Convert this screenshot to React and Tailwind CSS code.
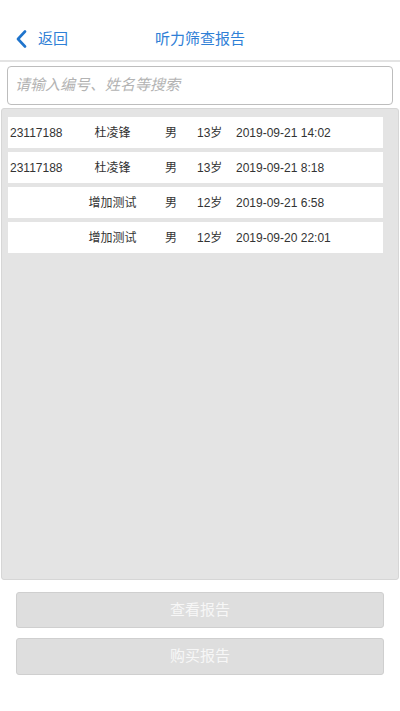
import React from 'react'

const rows = [
  { id: '23117188', name: '杜凌锋', sex: '男', age: '13岁', time: '2019-09-21 14:02' },
  { id: '23117188', name: '杜凌锋', sex: '男', age: '13岁', time: '2019-09-21 8:18' },
  { id: '', name: '增加测试', sex: '男', age: '12岁', time: '2019-09-21 6:58' },
  { id: '', name: '增加测试', sex: '男', age: '12岁', time: '2019-09-20 22:01' },
]

const font = { fontFamily: '"Liberation Sans", "Noto Sans CJK SC", sans-serif' }

export default function App() {
  return (
    <div className="w-[400px] h-[711px] bg-white flex flex-col" style={font}>
      {/* Header */}
      <div className="h-[60px] relative flex items-center justify-center pt-[17px]">
        <button className="absolute left-[16px] top-[17px] bottom-0 flex items-center gap-[11px] text-[15px] text-[#2f80d6]">
          <svg width="11" height="18" viewBox="0 0 11 18" fill="none">
            <path d="M9 1.5 L2 9 L9 16.5" stroke="#1f74cc" strokeWidth="2.6" strokeLinecap="round" strokeLinejoin="round" />
          </svg>
          <span className="leading-none">返回</span>
        </button>
        <h1 className="text-[15px] text-[#2f80d6] leading-none">听力筛查报告</h1>
      </div>
      <div className="h-[2px] bg-[#e3e3e3]" />

      {/* Search */}
      <div className="mx-[7px] mt-[4px] h-[39px] border border-[#bdbdbd] rounded-[4px] flex items-center px-[7px]">
        <input
          className="w-full outline-none text-[15px] italic placeholder-[#b3b3b3] bg-transparent"
          placeholder="请输入编号、姓名等搜索"
        />
      </div>

      {/* List */}
      <div className="mx-[1px] mt-[3px] h-[472px] bg-[#e4e4e4] border border-[#d6d6d6] rounded-[3px] pt-[8px] pl-[6px] pr-[15px] flex flex-col gap-[4px]">
        {rows.map((r, i) => (
          <div key={i} className="h-[31px] bg-white flex items-center text-[12px] text-[#333333]">
            <span className="w-[72px] pl-[2px]">{r.id}</span>
            <span className="w-[65px] text-center">{r.name}</span>
            <span className="w-[52px] text-center">{r.sex}</span>
            <span className="w-[39px]">{r.age}</span>
            <span>{r.time}</span>
          </div>
        ))}
      </div>

      {/* Buttons */}
      <div className="mx-[16px] mt-[12px] flex flex-col gap-[10px]">
        <button className="h-[36px] bg-[#dedede] border border-[#cfcfcf] rounded-[3px] text-[15px] text-[#f7f7f7]">
          查看报告
        </button>
        <button className="h-[37px] bg-[#dedede] border border-[#cfcfcf] rounded-[3px] text-[15px] text-[#f7f7f7]">
          购买报告
        </button>
      </div>
    </div>
  )
}
